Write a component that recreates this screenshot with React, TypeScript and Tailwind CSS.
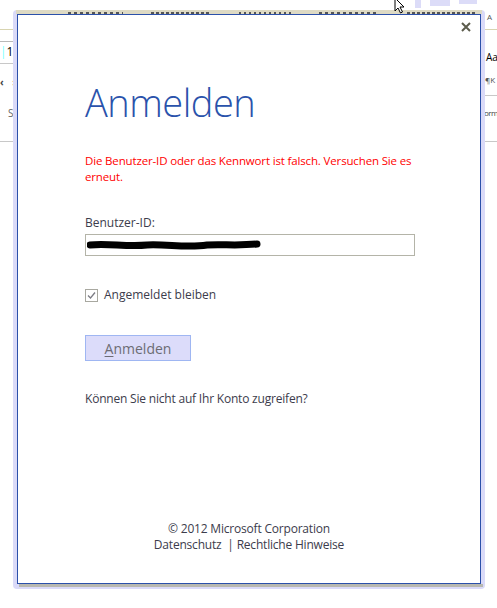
import React from "react";

const body = { fontFamily: '"Open Sans", "Noto Sans", sans-serif' };

function Rule({ c = "#c8c8c8" }: { c?: string }) {
  return <div className="h-px w-full" style={{ background: c }} />;
}

export default function App() {
  return (
    <div className="relative w-[497px] h-[608px] bg-white overflow-hidden" style={body}>
      {/* background document window: left and right edges visible */}
      <div className="flex justify-between w-full h-full">
        <div className="w-[16px] flex flex-col pt-[29px]">
          <Rule c="#d8d4b0" />
          <div className="h-[11px]" />
          <Rule c="#b8b8b8" />
          <div className="text-[12px] leading-[16px] text-black pt-[2px] h-[21px]">
            <span className="text-[#7ff]">|</span>1
          </div>
          <Rule />
          <div className="flex justify-between text-[10px] leading-[14px] text-[#444] font-bold pt-[11px] h-[42px]">
            <span>‹</span>
            <span>›</span>
          </div>
          <div className="pl-[8px] text-[10px] leading-[14px] text-[#666] h-[35px]">Sc</div>
          <Rule />
        </div>
        <div className="w-[16px] flex flex-col pt-[12px] pl-[3px] whitespace-nowrap">
          <div className="pl-[3px] text-[8px] leading-[10px] text-[#555] h-[17px]">A</div>
          <Rule c="#d8d4b0" />
          <div className="pl-[2px] pt-[20px] text-[10px] leading-[14px] text-black h-[44px]">Aa</div>
          <div className="pl-[1px] text-[8px] leading-[12px] text-[#555] h-[21px]">¶K</div>
          <Rule />
          <div className="pt-[11px] text-[8px] leading-[12px] text-[#444] tracking-[-0.5px] h-[45px]">orm</div>
          <Rule />
        </div>
      </div>

      {/* lavender ribbon highlights top right */}
      <div className="absolute left-[415px] top-0 flex gap-[9px]">
        <div className="w-[6px] h-[8px] bg-[#dcdcf8]" />
        <div className="w-[20px] h-[6px] bg-[#dcdcf8]" />
        <div className="w-[18px] h-[4px] bg-[#dcdcf8]" />
      </div>

      {/* dialog window with its shadow frame */}
      <div className="absolute left-[13px] top-[10px] w-[472px] h-[579px] rounded-[4px] bg-[#dadaf8] flex flex-col items-center">
        <div className="w-[466px] h-[4px] bg-[#dedac4] overflow-hidden">
          <div className="flex gap-[28px] pl-[52px] mt-[2px] h-[2px] overflow-hidden">
            <div className="w-[55px] h-[2px] bg-[repeating-linear-gradient(90deg,#555_0_3px,transparent_3px_6px)]" />
            <div className="w-[60px] h-[2px] bg-[repeating-linear-gradient(90deg,#555_0_3px,transparent_3px_5px)]" />
            <div className="w-[52px] h-[2px] bg-[repeating-linear-gradient(90deg,#555_0_2px,transparent_2px_5px)]" />
            <div className="w-[60px] h-[2px] bg-[repeating-linear-gradient(90deg,#555_0_3px,transparent_3px_6px)]" />
            <div className="w-[70px] h-[2px] bg-[repeating-linear-gradient(90deg,#555_0_3px,transparent_3px_5px)]" />
          </div>
        </div>
        <div className="w-[464px] h-[570px] bg-white border border-[#2b50aa] flex flex-col">
          <div className="flex justify-end pr-[9px] pt-[7px] h-[26px]">
            <svg width="10" height="10" viewBox="0 0 10 10">
              <path d="M1 1 L9 9 M9 1 L1 9" stroke="#5c5c4c" strokeWidth="2" />
            </svg>
          </div>
          <div className="pl-[67px] flex flex-col">
            <h1 className="mt-[39px] text-[38px] leading-[44px] text-[#2a52ab] font-light tracking-[-0.5px]">
              Anmelden
            </h1>
            <p className="mt-[29px] w-[340px] text-[11.5px] leading-[16px] text-[#ff0000] tracking-[-0.15px]">
              Die Benutzer-ID oder das Kennwort ist falsch. Versuchen Sie es erneut.
            </p>
            <div className="mt-[30px] text-[12px] leading-[16px] text-[#3c3c4c]">Benutzer-ID:</div>
            <div className="mt-[3px] w-[330px] h-[22px] border border-[#b4b4a8] bg-white flex items-center pl-[1px]">
              <svg width="176" height="14" viewBox="0 0 176 14">
                <path
                  d="M3 7 C20 5 40 9 60 7 C80 6 100 10 120 7 C135 6 150 8 170 6"
                  stroke="black"
                  strokeWidth="7"
                  strokeLinecap="round"
                  fill="none"
                />
              </svg>
            </div>
            <label className="mt-[31px] flex items-center gap-[6px] text-[12px] leading-[16px] text-[#3c3c4c]">
              <span className="w-[13px] h-[13px] border border-[#a8a8a0] bg-white flex items-center justify-center">
                <svg width="9" height="9" viewBox="0 0 9 9">
                  <path d="M1 4.5 L3.5 7 L8 1.5" stroke="#7c7c84" strokeWidth="1.3" fill="none" />
                </svg>
              </span>
              Angemeldet bleiben
            </label>
            <button className="mt-[32px] w-[106px] h-[26px] bg-[#dcdcfa] border border-[#9fb6f2] text-[14px] text-[#6c6c74] flex items-center justify-center">
              <span>
                <span className="underline underline-offset-2">A</span>nmelden
              </span>
            </button>
            <div className="mt-[30px] text-[12px] leading-[16px] text-[#3c3c4c] tracking-[-0.2px]">
              Können Sie nicht auf Ihr Konto zugreifen?
            </div>
          </div>
          <div className="flex-1" />
          <div className="flex flex-col items-center pb-[30px] text-[12px] leading-[16px] text-[#3c3c4c] tracking-[-0.2px]">
            <div>© 2012 Microsoft Corporation</div>
            <div>Datenschutz&nbsp; | Rechtliche Hinweise</div>
          </div>
        </div>
        <div className="w-[464px] ml-[3px] h-[3px] bg-[#b8b8b0]" />
      </div>

      {/* mouse cursor */}
      <svg className="absolute left-[394px] top-[-3px]" width="14" height="18" viewBox="0 0 14 18">
        <path d="M1 1 L1 14 L4 11 L6.5 16 L8.5 15 L6 10 L10 10 Z" fill="white" stroke="black" strokeWidth="1" />
      </svg>
    </div>
  );
}
